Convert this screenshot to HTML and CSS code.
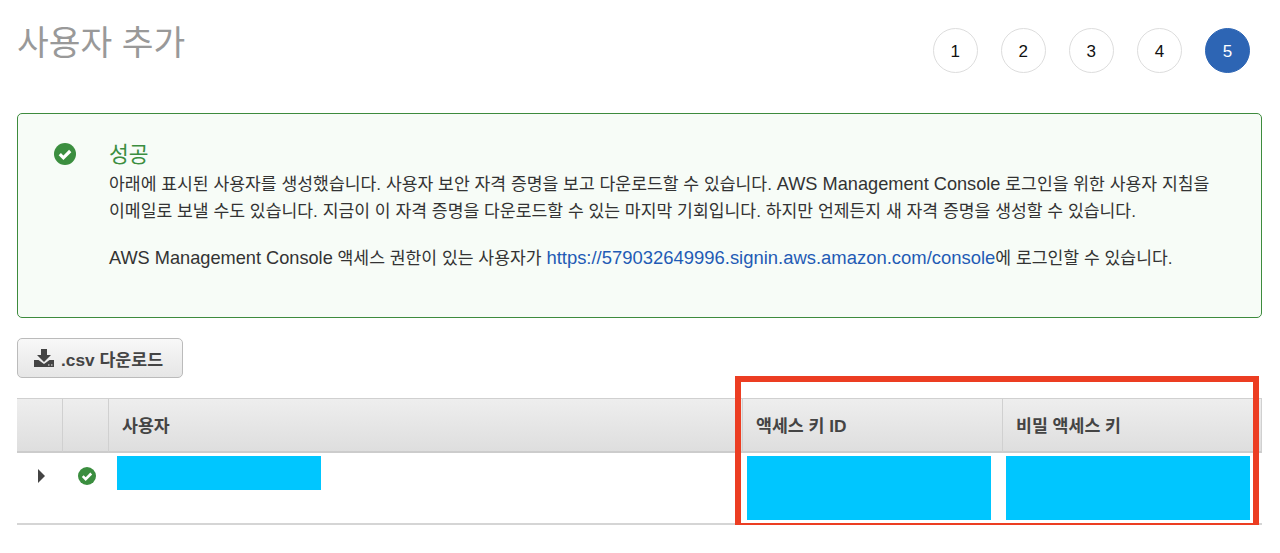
FILE: index.html
```html
<!DOCTYPE html>
<html lang="ko">
<head>
  <meta charset="UTF-8">
  <title>사용자 추가</title>
  <link rel="stylesheet" href="styles.css">
</head>
<body>
  <!-- Header -->
  <div class="page-head">
    <h1>사용자 추가</h1>
    <div class="steps">
      <div class="step">1</div>
      <div class="step">2</div>
      <div class="step">3</div>
      <div class="step">4</div>
      <div class="step active">5</div>
    </div>
  </div>

  <!-- Success message -->
  <div class="alert">
    <svg class="alert-icon" viewBox="0 0 22 22">
      <circle cx="11" cy="11" r="11" fill="#3b8e3f"/>
      <path d="M5.800 11.200 9.400 14.800 16.200 8" fill="none" stroke="#fff" stroke-width="3.200"/>
    </svg>
    <div class="alert-body">
      <div class="alert-title">성공</div>
      <p>아래에 표시된 사용자를 생성했습니다. 사용자 보안 자격 증명을 보고 다운로드할 수 있습니다. <span class="latin">AWS Management Console</span> 로그인을 위한 사용자 지침을<br>이메일로 보낼 수도 있습니다. 지금이 이 자격 증명을 다운로드할 수 있는 마지막 기회입니다. 하지만 언제든지 새 자격 증명을 생성할 수 있습니다.</p>
      <p><span class="latin">AWS Management Console</span> 액세스 권한이 있는 사용자가 <a class="latin" href="#">https://579032649996.signin.aws.amazon.com/console</a>에 로그인할 수 있습니다.</p>
    </div>
  </div>

  <button class="csv-btn">
    <svg viewBox="0 0 20 18" width="20" height="18">
      <path d="M7 0h6v6h4l-7 7-7-7h4z" fill="#444"/>
      <path d="M0 11h4.500l5.500 4 5.500-4H20v7H0z" fill="#444"/>
      <path d="M14 15.500h1.500v1H14zM17 15.500h1.500v1H17z" fill="#eee"/>
    </svg>
    .csv 다운로드
  </button>

  <!-- Users table -->
  <div class="table-wrap">
    <div class="users">
      <div class="th"></div>
      <div class="th"></div>
      <div class="th">사용자</div>
      <div class="th">액세스 키 ID</div>
      <div class="th">비밀 액세스 키</div>

      <div class="td td-center">
        <span class="arrow"></span>
      </div>
      <div class="td td-center">
        <svg class="row-icon" viewBox="0 0 22 22">
          <circle cx="11" cy="11" r="11" fill="#3b8e3f"/>
          <path d="M5.800 11.200 9.400 14.800 16.200 8" fill="none" stroke="#fff" stroke-width="3.200"/>
        </svg>
      </div>
      <div class="td td-user"><div class="mask mask-user"></div></div>
      <div class="td td-key"><div class="mask mask-key"></div></div>
      <div class="td td-key td-last"><div class="mask mask-key"></div></div>
    </div>
    <div class="highlight"></div>
  </div>
</body>
</html>
```

FILE: styles.css
```css
/* Global Styles */
body {
  font-family: "Liberation Sans", "Noto Sans CJK KR", sans-serif;
  margin: 0;
  padding: 0 18px 0 17px;
  background: #fff;
  color: #222;
  overflow: hidden;
}

/* Header */
.page-head {
  display: flex;
  justify-content: space-between;
  height: 113px;
}

h1 {
  margin: 0;
  padding-top: 20px;
  font-size: 34.500px;
  line-height: 46px;
  font-weight: 400;
  color: #999;
}

.steps {
  display: flex;
  gap: 23.100px;
  padding: 28px 12px 0 0;
}

.step {
  box-sizing: border-box;
  width: 45px;
  height: 45px;
  padding-top: 2px;
  border: 1px solid #ddd;
  border-radius: 50%;
  display: flex;
  align-items: center;
  justify-content: center;
  font-size: 17px;
  color: #111;
}

.step.active {
  background-color: #2d65b4;
  border-color: #2d65b4;
  color: #fff;
}

/* Success message */
.alert {
  box-sizing: border-box;
  height: 205px;
  display: flex;
  padding: 26px 20px 0 36px;
  background-color: #f7fcf7;
  border: 1px solid #3d8b3d;
  border-radius: 5px;
}

.alert-icon {
  width: 22px;
  height: 22px;
  margin-top: 3px;
  margin-right: 33px;
  flex: none;
}

.alert-title {
  font-size: 21.500px;
  line-height: 31px;
  color: #3b8e3f;
}

.alert-body p {
  margin: 0 0 19px;
  font-size: 17.200px;
  line-height: 27px;
  color: #333;
  white-space: nowrap;
}

.latin {
  font-size: 18.200px;
}

.alert-body a {
  font-size: 18.450px;
  color: #1f5bb5;
  text-decoration: none;
}

/* Download button */
.csv-btn {
  display: flex;
  align-items: center;
  gap: 7px;
  box-sizing: border-box;
  width: 166px;
  height: 40px;
  margin: 20px 0;
  padding: 0 0 0 16px;
  font-family: inherit;
  font-size: 17.300px;
  font-weight: 700;
  color: #444;
  background: linear-gradient(#f8f8f8, #e6e6e6);
  border: 1px solid #bbb;
  border-radius: 5px;
}

/* Users table */
.table-wrap {
  position: relative;
}

.users {
  display: grid;
  grid-template-columns: 45px 46px 634px 260px 260px;
  grid-template-rows: 55px 70px;
  border-bottom: 2px solid #d5d5d5;
}

.th {
  display: flex;
  align-items: center;
  box-sizing: border-box;
  padding: 0 13px 2px;
  font-size: 17.300px;
  font-weight: 700;
  color: #444;
  background: linear-gradient(#eeeeee, #dedede);
  border-top: 1px solid #d0d0d0;
  border-bottom: 2px solid #cccccc;
  border-left: 1px solid #d0d0d0;
}

.th:first-child {
  border-left: 0;
}

.th:nth-child(5) {
  border-right: 1px solid #d0d0d0;
}

.td-center {
  display: flex;
  justify-content: center;
  padding-top: 16px;
  box-sizing: border-box;
}

.arrow {
  width: 0;
  height: 0;
  margin-top: 0;
  border-top: 7px solid transparent;
  border-bottom: 7px solid transparent;
  border-left: 7px solid #444;
  margin-left: 4px;
}

.row-icon {
  width: 18px;
  height: 18px;
  margin: -2px 0 0 4px;
}

.td-user {
  padding: 3px 0 0 9px;
}

.td-key {
  padding: 3px 0 0 5px;
}

.td-last {
  padding-left: 4px;
}

.mask {
  background-color: #00c6ff;
}

.mask-user {
  width: 204px;
  height: 34px;
}

.mask-key {
  width: 244px;
  height: 64px;
}

/* Red box drawn over the key columns */
.highlight {
  position: absolute;
  left: 718px;
  top: -22px;
  width: 512px;
  height: 141px;
  border: 6px solid #ec3d22;
}
```
